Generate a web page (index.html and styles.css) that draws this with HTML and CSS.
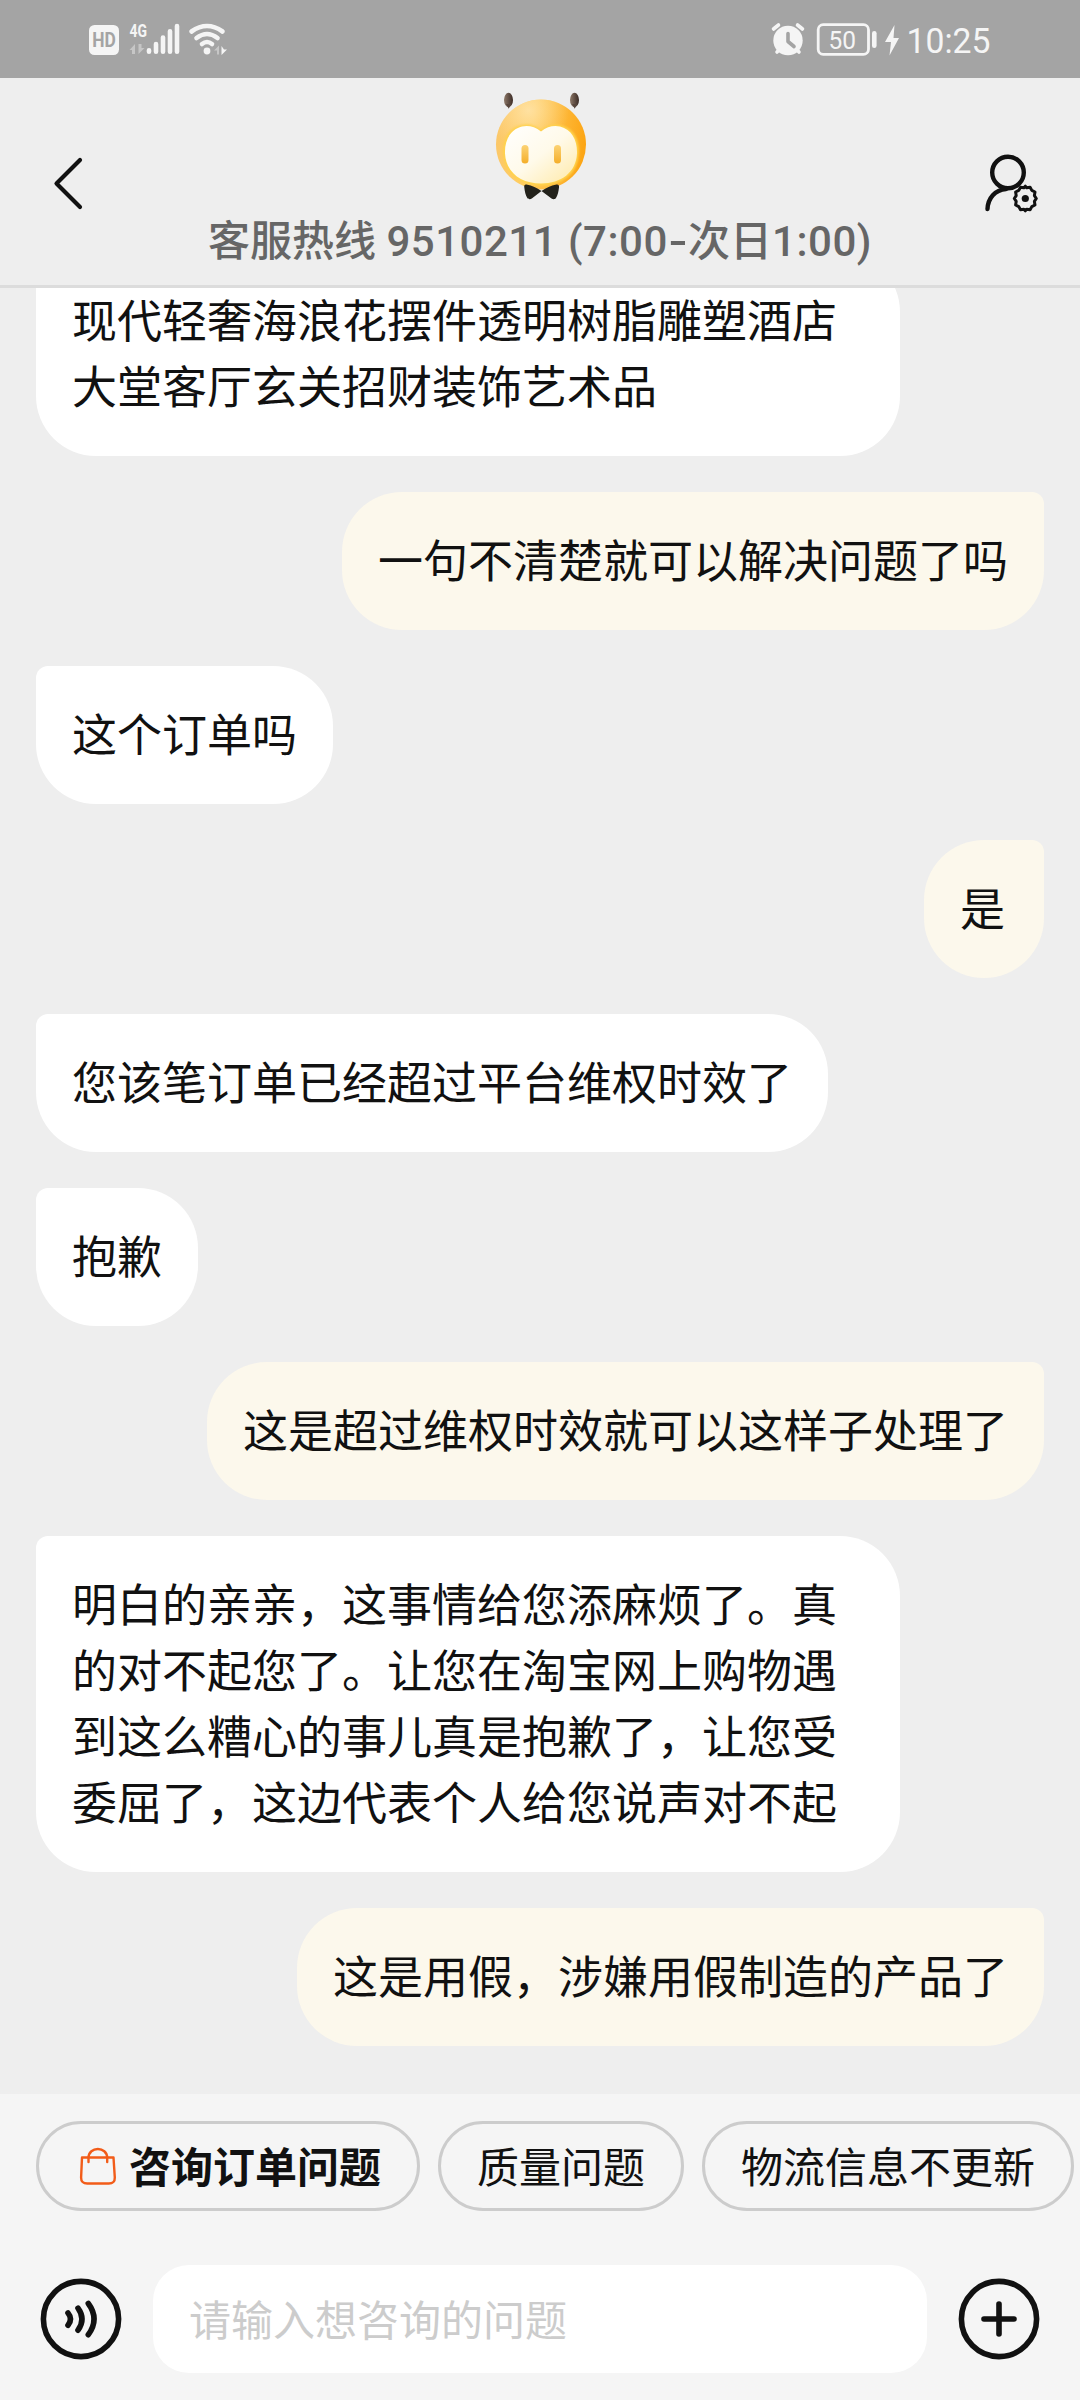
FILE: index.html
```html
<!DOCTYPE html>
<html lang="zh-CN">
<head>
<meta charset="utf-8">
<title>客服</title>
<link rel="stylesheet" href="styles.css">
</head>
<body>
<div class="app">
  <div class="status">
    <svg class="status-left" width="150" height="78" viewBox="80 0 150 78">
      <rect x="89" y="25" width="30" height="30" rx="5.5" fill="#f5f5f5"/>
      <text class="hd" x="92.3" y="47" textLength="23.6" lengthAdjust="spacingAndGlyphs">HD</text>
      <text class="g4" x="129.5" y="37" textLength="17.5" lengthAdjust="spacingAndGlyphs">4G</text>
      <g fill="#c6c6c6"><path d="M129.500 50l5.500-6v10h-3v-4z"/><path d="M138.500 44h3v4h3l-6 6z"/></g>
      <g stroke="#f5f5f5" stroke-width="4.600" stroke-linecap="round">
        <path d="M149 50.300v1.400M156 44v7.700M163 37.500v14.200M170 31.200v20.500M177 26v25.700"/>
      </g>
      <g fill="none" stroke="#f5f5f5" stroke-width="4.600" stroke-linecap="round">
        <path d="M191.500 31.500q15.500-11 31 0M196.500 38q10.500-8 21 0M202 44q5-4 10 0"/>
      </g>
      <circle cx="207" cy="51" r="3.400" fill="#f5f5f5"/>
      <path d="M214 50.500l5-5v9h-2v-4z" fill="#c6c6c6"/><path d="M221.500 46v9l5.500-5.500h-3z" fill="#f5f5f5"/>
    </svg>
    <svg class="status-right" width="240" height="78" viewBox="770 0 240 78">
      <circle cx="788" cy="40.500" r="14.700" fill="#f5f5f5"/>
      <path d="M773.500 29l5-4M802.500 29l-5-4M777 52l3-3M799 52l-3-3" stroke="#f5f5f5" stroke-width="3.600" stroke-linecap="round"/>
      <path d="M788 33.500v8l6 5" fill="none" stroke="#a4a4a4" stroke-width="3.600" stroke-linecap="round" stroke-linejoin="round"/>
      <rect x="818.200" y="24.700" width="50.300" height="29.600" rx="5" fill="none" stroke="#f5f5f5" stroke-width="2.800"/>
      <rect x="872" y="31" width="4.600" height="17" rx="2.300" fill="#f5f5f5"/>
      <text class="level" x="828.500" y="49" textLength="27.500" lengthAdjust="spacingAndGlyphs">50</text>
      <path d="M894.500 25l-9.500 17h6l-1.500 13.500 9.500-17.500h-5.500z" fill="#f5f5f5"/>
      <text class="clock" x="906.500" y="53" textLength="84" lengthAdjust="spacingAndGlyphs">10:25</text>
    </svg>
  </div>

  <header class="header">
    <svg class="back" width="60" height="60" viewBox="0 0 60 60"><path d="M40 7L16.500 30.500 40 54" fill="none" stroke="#111" stroke-width="4.200" stroke-linecap="round" stroke-linejoin="round"/></svg>
    <div class="title">
      <svg width="100" height="112" viewBox="490 90 100 112">
        <defs>
          <linearGradient id="head" x1="0" y1=".25" x2="1" y2=".4"><stop offset="0" stop-color="#fbc76a"/><stop offset=".4" stop-color="#ffcd62"/><stop offset="1" stop-color="#fca514"/></linearGradient>
          <radialGradient id="shine" cx=".36" cy=".12" r=".45"><stop offset="0" stop-color="#ffe6b0" stop-opacity=".8"/><stop offset="1" stop-color="#ffe0a0" stop-opacity="0"/></radialGradient>
          <linearGradient id="face" x1="0" y1="0" x2="1" y2="1"><stop offset="0" stop-color="#fff"/><stop offset=".5" stop-color="#fffaea"/><stop offset="1" stop-color="#ffe9a6"/></linearGradient>
          <linearGradient id="eye" x1="0" y1="0" x2="0" y2="1"><stop offset="0" stop-color="#fcd375"/><stop offset="1" stop-color="#f4ae2a"/></linearGradient>
          <linearGradient id="horn"><stop offset="0" stop-color="#8d7868"/><stop offset="1" stop-color="#3b2b25"/></linearGradient>
          <filter id="soft" x="-10%" y="-10%" width="120%" height="120%"><feGaussianBlur stdDeviation="1"/></filter>
        </defs>
        <circle cx="541" cy="144.500" r="45" fill="url(#head)"/>
        <circle cx="541" cy="144.500" r="45" fill="url(#shine)"/>
        <path d="M541 131c-6-5-13-7-20-5-13 3-18 15-17 28 1 20 17 31 37 31s36-11 37-31c1-13-4-25-17-28-7-2-14 0-20 5z" fill="#ffd54e" stroke="#ffd04b" stroke-width="1.500" filter="url(#soft)"/>
        <path d="M541 131.500c-6-5-13-6.500-19-5-12 3-17.500 14-17 27 1 19 16 30 36 30s35-11 36-30c.5-13-5-24-17-27-6-1.500-13 0-19 5z" fill="url(#face)"/>
        <rect x="521.500" y="145" width="7" height="18.500" rx="3.500" fill="url(#eye)"/>
        <rect x="554" y="145" width="7" height="18.500" rx="3.500" fill="url(#eye)"/>
        <ellipse cx="508.500" cy="100" rx="4.500" ry="7.200" fill="url(#horn)"/>
        <ellipse cx="574.500" cy="100" rx="4.500" ry="7.200" fill="url(#horn)"/>
        <path d="M506 104h5l-2.200 4.800zM572 104h5l-2.200 4.800z" fill="#59473d"/>
        <path d="M541.500 191c-5-3-9-5.500-15-6.500-2-.3-2.500 1-2.200 3 .5 4 1.200 8 3 10.500 1 1.500 3 1.500 4.500.5zM541.500 191c5-3 9-5.500 15-6.500 2-.3 2.800 1 2.500 3-.5 4-1.200 8-3 10.500-1 1.500-3 1.500-4.500.5z" fill="#23221b"/>
      </svg>
      <div class="hotline">客服热线 <span class="num">9510211 (7:00</span><span class="dash">-</span>次日<span class="num">1:00)</span></div>
    </div>
    <svg class="profile" width="60" height="66" viewBox="980 150 60 66" fill="none" stroke="#111" stroke-width="4.400" stroke-linecap="round">
      <circle cx="1008" cy="172.500" r="15.800"/>
      <path d="M1006 189c-11 1-18 9-18.500 20"/>
      <path d="M1036.300 198.500l-1.900 2.900.6 3.600-3.200 1.600-1.700 3.100-3.400-.5-1.400 1.600-1.400-1.600-3.400.5-1.700-3.100-3.200-1.600.6-3.600-1.900-2.900 1.900-2.900-.6-3.600 3.200-1.600 1.700-3.100 3.400.5 1.400-1.600 1.400 1.600 3.400-.5 1.700 3.100 3.200 1.600-.6 3.600z" fill="#eee" stroke-width="3" stroke-linejoin="round"/>
      <circle cx="1025.300" cy="198.500" r="3.600" fill="#111" stroke="none"/>
    </svg>
  </header>

  <main class="chat">
    <p class="bubble">现代轻奢海浪花摆件透明树脂雕塑酒店大堂客厅玄关招财装饰艺术品</p>
    <p class="bubble mine">一句不清楚就可以解决问题了吗</p>
    <p class="bubble">这个订单吗</p>
    <p class="bubble mine">是</p>
    <p class="bubble">您该笔订单已经超过平台维权时效了</p>
    <p class="bubble">抱歉</p>
    <p class="bubble mine">这是超过维权时效就可以这样子处理了</p>
    <p class="bubble">明白的亲亲，这事情给您添麻烦了。真的对不起您了。让您在淘宝网上购物遇到这么糟心的事儿真是抱歉了，让您受委屈了，这边代表个人给您说声对不起</p>
    <p class="bubble mine">这是用假，涉嫌用假制造的产品了</p>
  </main>

  <footer class="panel">
    <div class="chips">
      <div class="chip strong">
        <svg width="48" height="48" viewBox="75 2142 48 48" fill="none" stroke="#f25c19" stroke-width="2.400" stroke-linecap="round" stroke-linejoin="round"><path d="M82 2158.500h31.500l1.300 20q.2 6-6 6h-21.500q-6.300 0-6.200-6z"/><path d="M88.500 2163v-4c0-12 18.700-12 18.700 0v4"/></svg>
        <span>咨询订单问题</span>
      </div>
      <div class="chip">质量问题</div>
      <div class="chip">物流信息不更新</div>
    </div>
    <div class="composer">
      <svg width="84" height="84" viewBox="-42 -42 84 84" fill="none" stroke="#111" stroke-width="5.600" stroke-linecap="round"><circle r="37.600"/><path d="M-13-6q5 6 0 12.300M-3-10.800q8 11 0 22M7.300-15.500q11.500 15.500 0 31.200"/></svg>
      <div class="input">请输入想咨询的问题</div>
      <svg width="84" height="84" viewBox="-42 -42 84 84" fill="none" stroke="#111" stroke-width="5.600" stroke-linecap="round"><circle r="37.600"/><path d="M-15 0h30M0-15v30"/></svg>
    </div>
  </footer>
</div>
</body>
</html>
```

FILE: styles.css
```css
* { box-sizing: border-box; }
body {
  margin: 0;
  background: #eee;
  color: #111;
  font-family: "Noto Sans CJK SC", sans-serif;
}
.app {
  display: flex;
  flex-direction: column;
  width: 1080px;
  height: 2400px;
  overflow: hidden;
}
.status {
  display: flex;
  justify-content: space-between;
  height: 78px;
  padding: 0 70px 0 80px;
  background: #a4a4a4;
  font-family: Roboto, sans-serif;
}
.status text { fill: #f5f5f5; }
.status .hd { fill: #a4a4a4; font-size: 20px; font-weight: 700; }
.status .g4 { font-size: 18px; font-weight: 700; }
.status .level { font-size: 26.500px; }
.status .clock { font-size: 35.500px; }

.header {
  display: flex;
  justify-content: space-between;
  height: 210px;
  padding: 0 40px;
  border-bottom: 3px solid #dcdcdc;
  background: #eee;
}
.back { margin-top: 75px; }
.title {
  display: flex;
  flex-direction: column;
  align-items: center;
  padding-top: 12px;
}
.hotline {
  margin-top: 10px;
  color: #666;
  font: 500 42px/60px Roboto, "Noto Sans CJK SC", sans-serif;
  white-space: nowrap;
}
.num { letter-spacing: .5px; }
.dash { display: inline-block; transform: scaleX(1.3); margin: 0 3px; }
.profile { margin-top: 72px; }

.chat {
  display: flex;
  flex: 1;
  flex-direction: column;
  align-items: flex-start;
  justify-content: flex-end;
  gap: 36px;
  min-height: 0;
  padding: 0 36px 48px;
  overflow: hidden;
}
.bubble {
  flex: none;
  min-width: 120px;
  max-width: 864px;
  margin: 0;
  padding: 34px 36px 38px;
  border-radius: 12px 60px 60px 60px;
  background: #fff;
  font-size: 45px;
  line-height: 66px;
}
.mine {
  align-self: flex-end;
  border-radius: 60px 12px 60px 60px;
  background: #fcf8ec;
}

.panel {
  height: 306px;
  padding-top: 27px;
  background: #f5f5f5;
}
.chips {
  display: flex;
  gap: 18px;
  padding-left: 36px;
}
.chip {
  display: flex;
  flex: none;
  align-items: center;
  gap: 6px;
  height: 90px;
  padding: 0 36px 2px;
  border: 3px solid #ccc;
  border-radius: 45px;
  font-size: 42px;
  line-height: 60px;
}
.strong { font-weight: 700; }
.composer {
  display: flex;
  align-items: center;
  gap: 30px;
  margin-top: 54px;
  padding: 0 39px;
}
.composer svg { flex: none; }
.input {
  flex: 1;
  height: 108px;
  padding: 0 36px;
  border-radius: 36px;
  background: #fff;
  color: #ccc;
  font-size: 42px;
  line-height: 105px;
}
```
